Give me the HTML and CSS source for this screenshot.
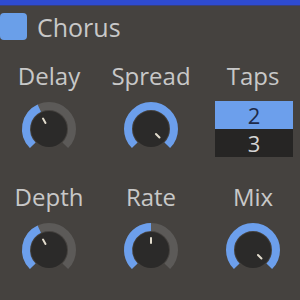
FILE: index.html
```html
<!DOCTYPE html>
<html lang="en">
<head>
  <meta charset="UTF-8" />
  <title>Chorus</title>
  <link rel="stylesheet" href="styles.css">
</head>
<body>
  <div class="topbar"></div>

  <div class="header">
    <span class="check"></span>
    <span class="title">Chorus</span>
  </div>

  <div class="params">
    <div class="param">
      <div class="label">Delay</div>
      <svg class="knob" width="60" height="60" viewBox="0 0 60 60">
        <path class="track" d="M13.74 46.26 A23 23 0 1 1 46.26 46.26" />
        <path class="value" d="M13.74 46.26 A23 23 0 0 1 20.28 9.16" />
        <circle class="body" cx="30" cy="30" r="18" />
        <line class="pointer" x1="26.5" y1="23.94" x2="24" y2="19.61" />
      </svg>
    </div>

    <div class="param">
      <div class="label">Spread</div>
      <svg class="knob" width="60" height="60" viewBox="0 0 60 60">
        <path class="value" d="M13.74 46.26 A23 23 0 1 1 46.26 46.26" />
        <circle class="body" cx="30" cy="30" r="18" />
        <line class="pointer" x1="34.95" y1="34.95" x2="38.49" y2="38.49" />
      </svg>
    </div>

    <div class="param">
      <div class="label">Taps</div>
      <div class="list">
        <div class="item selected">2</div>
        <div class="item">3</div>
      </div>
    </div>

    <div class="param">
      <div class="label">Depth</div>
      <svg class="knob" width="60" height="60" viewBox="0 0 60 60">
        <path class="track" d="M13.74 46.26 A23 23 0 1 1 46.26 46.26" />
        <path class="value" d="M13.74 46.26 A23 23 0 0 1 20.28 9.16" />
        <circle class="body" cx="30" cy="30" r="18" />
        <line class="pointer" x1="26.5" y1="23.94" x2="24" y2="19.61" />
      </svg>
    </div>

    <div class="param">
      <div class="label">Rate</div>
      <svg class="knob" width="60" height="60" viewBox="0 0 60 60">
        <path class="track" d="M13.74 46.26 A23 23 0 1 1 46.26 46.26" />
        <path class="value" d="M13.74 46.26 A23 23 0 0 1 30 7" />
        <circle class="body" cx="30" cy="30" r="18" />
        <line class="pointer" x1="30" y1="23" x2="30" y2="18" />
      </svg>
    </div>

    <div class="param">
      <div class="label">Mix</div>
      <svg class="knob" width="60" height="60" viewBox="0 0 60 60">
        <path class="value" d="M13.74 46.26 A23 23 0 1 1 46.26 46.26" />
        <circle class="body" cx="30" cy="30" r="18" />
        <line class="pointer" x1="34.95" y1="34.95" x2="38.49" y2="38.49" />
      </svg>
    </div>
  </div>
</body>
</html>
```

FILE: styles.css
```css
* {
  margin: 0;
  padding: 0;
  box-sizing: border-box;
}

body {
  width: 300px;
  height: 300px;
  overflow: hidden;
  background: #45423f;
  color: #c8c8c8;
  font-family: 'Open Sans', sans-serif;
}

.topbar {
  height: 6px;
  background: #2e4bd0;
  border-bottom: 1px solid #39407a;
}

.header {
  display: flex;
  align-items: center;
  gap: 10px;
  margin-top: 7px;
  height: 27px;
}

.check {
  width: 27px;
  height: 27px;
  border-radius: 4px;
  background: #6a9fe9;
}

.title {
  font-size: 25px;
  line-height: 32px;
}

.params {
  display: grid;
  grid-template-columns: repeat(3, 102px);
  row-gap: 22px;
  margin-top: 20px;
  margin-left: -2px;
}

.param {
  display: flex;
  flex-direction: column;
  align-items: center;
  gap: 7px;
}

.label {
  font-size: 24px;
  line-height: 32px;
}

.knob {
  display: block;
}

.knob path {
  fill: none;
  stroke-width: 8;
}

.knob .track {
  stroke: #5c5a58;
}

.knob .value {
  stroke: #6c9fec;
}

.knob .body {
  fill: #2b2a29;
}

.knob .pointer {
  stroke: #e2dccd;
  stroke-width: 2;
  stroke-linecap: round;
}

.list {
  width: 78px;
  margin-top: 2px;
  margin-left: 2px;
}

.item {
  height: 28px;
  text-align: center;
  font-size: 22px;
  line-height: 28px;
  background: #262524;
  color: #d4d4d4;
}

.item.selected {
  background: #6c9fec;
  color: #1d2a4a;
}
```
